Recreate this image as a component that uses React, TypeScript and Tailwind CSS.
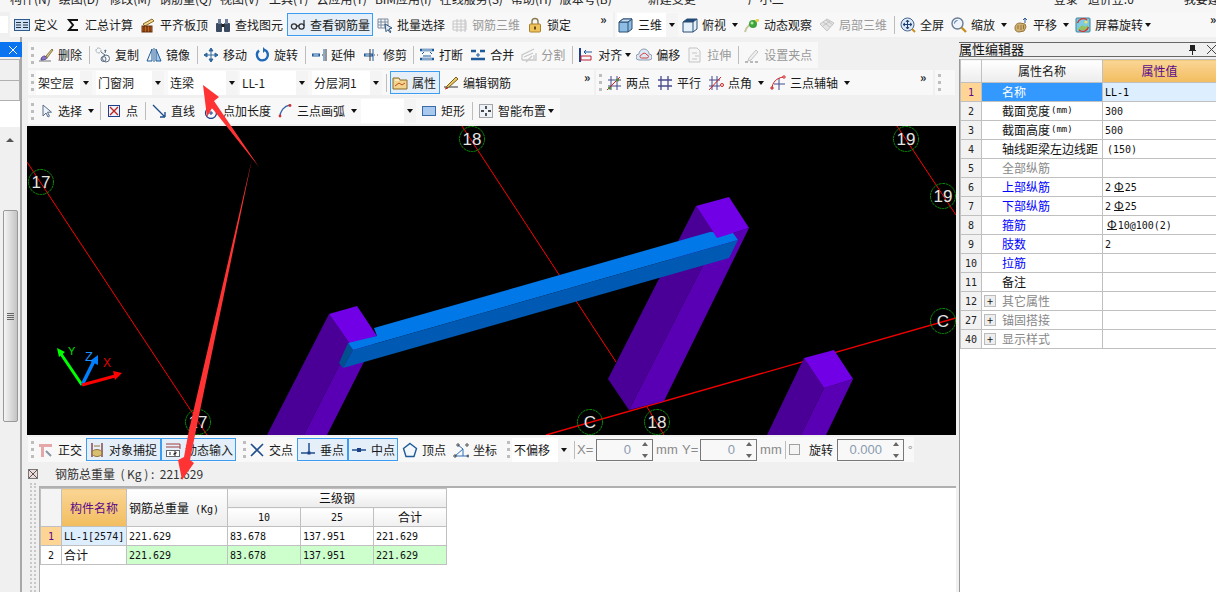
import React from 'react';
import clsx from 'clsx';

const S: React.FC<{ children: React.ReactNode }> = ({ children }) => (
  <svg width="16" height="16" viewBox="0 0 16 16" fill="none" className="shrink-0">
    {children}
  </svg>
);

// toolbar icons, all on a 16x16 grid
const icons: Record<string, React.ReactNode> = {
  define: <><rect x="0.5" y="2.5" width="15" height="11" fill="#cfe0f5" stroke="#2c5a8c" /><path d="M2 5.5h5M2 8h5M2 10.5h5M9 5.5h5M9 8h5M9 10.5h5" stroke="#234" /></>,
  sigma: <path d="M12 4V3H4l4 5-4 5h8v-1" stroke="#111" strokeWidth="2" />,
  flush: <><path d="M3 7l9-5 2 2-9 5z" fill="#f0d890" stroke="#8a6a20" /><rect x="2" y="9" width="10" height="6" fill="#c8641e" stroke="#6a3410" /><path d="M4 9v6M7 9v6M10 9v6" stroke="#401e08" /></>,
  binoc: <><rect x="1" y="6" width="6" height="9" rx="1" fill="#3a4a60" /><rect x="9" y="6" width="6" height="9" rx="1" fill="#3a4a60" /><rect x="3" y="2" width="3" height="5" fill="#6d7f98" /><rect x="10" y="2" width="3" height="5" fill="#6d7f98" /><rect x="6.5" y="7" width="3" height="3" fill="#222" /></>,
  glasses: <><circle cx="4" cy="9.5" r="2.6" stroke="#333" strokeWidth="1.3" /><circle cx="11.5" cy="9.5" r="2.6" stroke="#333" strokeWidth="1.3" /><path d="M6.5 9h2.5M14 9V3" stroke="#333" strokeWidth="1.3" /></>,
  batch: <><path d="M1 2h10v9H1zM1 5h10M1 8h10M4 2v9M8 2v9" stroke="#7a8ca0" /><path d="M8 7l7 4-3 1 2 3-1 .7-2-3-2 2z" fill="#dfe8f4" stroke="#34587c" /></>,
  rebar3d: <path d="M1 4h13v9H1zM1 7h13M1 10h13M5 2v13M9 2v13M13 2v13" stroke="#c6c6c6" />,
  lock: <><path d="M5 7V4.5a3 3 0 0 1 6 0V7" stroke="#8a7a50" strokeWidth="1.4" /><rect x="2.5" y="7" width="11" height="8" rx="1" fill="#efc35c" stroke="#a8802c" /><rect x="7" y="9.5" width="2" height="3" fill="#6a4a10" /></>,
  cube: <><path d="M1 5l4-3h9v10l-4 3H1z" fill="#8dbde4" stroke="#2d4f72" /><path d="M1 5h9v10M10 5l4-3" stroke="#2d4f72" /><path d="M1 5l4-3h9l-4 3z" fill="#c5dff2" stroke="#2d4f72" /></>,
  top: <><path d="M1 5l4-3h10v10l-4 3H1z" fill="#e4f0fa" stroke="#2d4f72" /><path d="M1 5l4-3h10l-4 3z" fill="#214a7a" /><path d="M1 5h10v10M11 5l4-3" stroke="#2d4f72" /></>,
  orbit: <><path d="M1 15C2 10 8 4 15 3" stroke="#c8c8a0" strokeWidth="2" /><circle cx="9" cy="7" r="4" fill="#3da43d" /><circle cx="8" cy="6" r="1.5" fill="#b4e8a0" /><circle cx="13" cy="3.5" r="1.6" fill="#f0d040" /></>,
  local3d: <><path d="M1 7l7-5 7 4-7 8z" fill="#e4e4e4" stroke="#c4c4c4" /><path d="M4 5l7 5M7 3l7 5M4 9l7-5" stroke="#c4c4c4" /></>,
  full: <><circle cx="7.5" cy="7.5" r="6.5" fill="#dde8f6" stroke="#44648c" /><path d="M7.5 3v9M3 7.5h9M7.5 3L6 5M7.5 3L9 5M7.5 12L6 10M7.5 12L9 10M3 7.5L5 6M3 7.5L5 9M12 7.5L10 6M12 7.5L10 9" stroke="#1f3f70" /><path d="M12 12l3 3" stroke="#c89020" strokeWidth="2" /></>,
  zoom: <><circle cx="6.5" cy="6.5" r="5.5" fill="#eef4fa" stroke="#6a7d92" strokeWidth="1.4" /><path d="M3.5 6.5a3 3 0 0 1 3-3" stroke="#3a6aa8" /><path d="M10.5 10.5l4.5 4.5" stroke="#c89020" strokeWidth="2.4" /></>,
  pan: <><path d="M2 11c0-4 3-5 5-5l5 1 1 3-2 4-5 1c-2 0-4-1-4-4z" fill="#d0b070" stroke="#94743a" /><path d="M5 8v4M8 8v5M10.5 8v4" stroke="#94743a" /><path d="M12 1v5M10 3l2-2 2 2" stroke="#2a5a9a" /></>,
  screen: <><rect x="1" y="1" width="14" height="14" rx="1" fill="#7ccbe0" stroke="#40809a" /><path d="M3 12l4-4 3 2 3-2v5H3z" fill="#94c060" /><circle cx="11" cy="5" r="1.6" fill="#f4e070" /><path d="M2.5 6A6 6 0 0 1 12 3M13.5 10A6 6 0 0 1 4 13" stroke="#d8302c" strokeWidth="1.3" /></>,
  del: <><path d="M1 14h12" stroke="#777" /><path d="M3 13c0-3 2-4 4-4l2 2c0 1-3 2-6 2z" fill="#8a78c8" stroke="#514090" /><path d="M8 9l6-7 1 1-6 8z" fill="#d8c890" stroke="#8a7840" /></>,
  copy: <><circle cx="3.5" cy="3.5" r="2.5" stroke="#7a8a9a" strokeDasharray="1.5 1" /><circle cx="11" cy="11.5" r="3.5" stroke="#576a80" /><circle cx="8.5" cy="12" r="2.5" stroke="#576a80" /><path d="M6 5l4 3" stroke="#576a80" /><path d="M11 3l-2 1M11 3l-1 3" stroke="#576a80" /></>,
  mirror: <><path d="M1 14L6 2v12z" fill="#eaf2fa" stroke="#1f5a9a" /><path d="M15 14L10 2v12z" fill="#a8c8ea" stroke="#1f5a9a" /><path d="M8 1v14" stroke="#1f5a9a" /></>,
  move: <path d="M8 1v14M1 8h14M8 1L6 4h4zM8 15l-2-3h4zM1 8l3-2v4zM15 8l-3-2v4z" fill="#30689c" stroke="#30689c" />,
  rotate: <><path d="M5 3.5A5.5 5.5 0 1 0 11 3" stroke="#1f6ab8" strokeWidth="2.4" /><path d="M9 0l3 3-3 3z" fill="#1f6ab8" /></>,
  extend: <><path d="M1 8h8" stroke="#1f5a9a" strokeWidth="3" /><path d="M2.5 8h5" stroke="#eaf2fa" /><path d="M11 8h1M15 2v12" stroke="#333" /><path d="M13 2v12" stroke="#1f5a9a" /></>,
  trim: <><path d="M1 8h9" stroke="#1f5a9a" strokeWidth="3" /><path d="M2.5 8h6" stroke="#eaf2fa" /><path d="M7 2v12" stroke="#333" /><path d="M11 8h1M14 8h1" stroke="#555" /><path d="M10 2v12" stroke="#1f5a9a" /></>,
  brk: <><path d="M1 3h14M1 12h14" stroke="#1f5a9a" strokeWidth="2.4" /><path d="M3 3h10M3 12h10" stroke="#eaf2fa" /><path d="M3 7l2-2M13 7l-2-2M4 9h8" stroke="#1f5a9a" /></>,
  merge: <><path d="M1 4h5M10 4h5M1 12h14" stroke="#1f5a9a" strokeWidth="2.4" /><path d="M8 6v4M6 8h4" stroke="#1f5a9a" /></>,
  split: <path d="M1 13h14v-7M1 13V8l12-6M3 10l9-4M5 15l6-6M13 12V8" stroke="#c8c8c8" strokeWidth="1.3" />,
  align: <><path d="M2 1v14" stroke="#1f3f8a" strokeWidth="2" /><path d="M3 13h10V9H3z" stroke="#c02030" /><path d="M6 5h8M6 5l2-2M6 5l2 2" stroke="#1f5a9a" /></>,
  offset: <><path d="M3 13a3 3 0 0 1 0-6 5 5 0 0 1 10 0 3 3 0 0 1 0 6z" fill="#dbe8f6" stroke="#8e9eb0" /><path d="M5.5 11a1.5 1.5 0 0 1 0-3 3 3 0 0 1 5.5 0 1.5 1.5 0 0 1 0 3z" stroke="#d04040" /></>,
  stretch: <><path d="M2 1h8l3 3v11H2z" fill="#f6f6f6" stroke="#c4c4c4" /><path d="M5 6h5M8 9h4M5 12h5" stroke="#c4c4c4" /></>,
  grips: <><path d="M1 15h3M6 15h3M11 15h3" stroke="#b8b8b8" strokeWidth="2" /><path d="M5 11l7-8 2 2-7 8-3 1z" fill="#efefef" stroke="#c4c4c4" /></>,
  props: <><path d="M1 3h6l1 2h7v9H1z" fill="#f2d48c" stroke="#8a6a2c" /><path d="M3 11l4-3 3 2 3-2" stroke="#c04c20" /><path d="M3 5h4" stroke="#fff" /></>,
  edit: <><path d="M1 12h14" stroke="#333" /><path d="M4 11L13 2l2 2-9 8-3 1z" fill="#e8c860" stroke="#7a6020" /><path d="M2 14l3-1" stroke="#c02020" /></>,
  two: <><path d="M2 5h13M2 11h13M5 1v14M11 1v14" stroke="#474a8c" /><path d="M1 15L14 2" stroke="#d02020" /><circle cx="3.5" cy="13" r="1.5" fill="#4a8a2c" /><circle cx="11.5" cy="5" r="1.5" fill="#4a8a2c" /></>,
  par: <path d="M1 5h14M1 11h14M4 1v14M11 1v14" stroke="#474a8c" strokeWidth="1.3" />,
  angle: <><path d="M1 5h11M1 11h11M4 1v14M9 1v14" stroke="#474a8c" /><path d="M1 15L13 2" stroke="#d02020" /><circle cx="14" cy="10" r="1.5" stroke="#d02020" /></>,
  three: <><path d="M9 3v12M4 9h11" stroke="#474a8c" /><path d="M2 14C2 7 7 3 13 2" stroke="#d02020" /><circle cx="2" cy="13" r="1.2" stroke="#d02020" /><circle cx="14" cy="2" r="1.2" stroke="#d02020" /></>,
  cursor: <path d="M5 2v11l3-3 2 4 1.5-.8-2-4h4z" fill="#eef3fa" stroke="#5a6d88" />,
  point: <><rect x="2.5" y="2.5" width="11" height="11" fill="#eef3fa" stroke="#1f3f8a" /><path d="M4 4l8 8M12 4l-8 8" stroke="#c02020" strokeWidth="1.3" /></>,
  line: <path d="M2 2l11 11M14 14v-5M14 14H9" stroke="#1f4f8a" strokeWidth="1.4" />,
  plen: <><circle cx="8" cy="10" r="5.5" stroke="#1f3f8a" strokeWidth="1.3" /><path d="M8 8v4M6 10h4M4 4l3-3" stroke="#1f3f8a" /></>,
  arc: <><path d="M3 14C3 8 7 3 13 2" stroke="#3a6aa8" strokeWidth="1.4" /><circle cx="3" cy="13" r="1.4" fill="#d03030" /><circle cx="13" cy="2.5" r="1.4" fill="#d03030" /></>,
  rect: <rect x="1.5" y="3.5" width="13" height="9" fill="#a8c8ee" stroke="#3a6aa8" />,
  smart: <><rect x="1.5" y="1.5" width="13" height="13" fill="#eef3fa" stroke="#555" strokeDasharray="1 1" /><path d="M8 3v3M8 10v3M3 8h3M10 8h3" stroke="#111" strokeWidth="1.4" /></>,
  ortho: <><path d="M1 2h13v3H6v10H3V5H1z" fill="#e4a8a8" /><path d="M8 9l5 5" stroke="#8a96a4" strokeWidth="2" /></>,
  snap: <><path d="M3 1v14M13 1v14" stroke="#7a3030" strokeWidth="1.3" /><ellipse cx="8" cy="11" rx="5" ry="3.5" fill="#d8c070" stroke="#94743a" /><path d="M5 4h6" stroke="#94743a" /></>,
  dyn: <><path d="M1 2h14M1 5h14" stroke="#a04040" /><path d="M15 2v5" stroke="#a04040" /><rect x="1.5" y="8.5" width="13" height="6" fill="#fff" stroke="#666" /><path d="M5 10v3M9 10h2v1.5H9V13h2" stroke="#222" /></>,
  cross: <path d="M2 2l12 12M14 2L2 14" stroke="#1f4f8a" strokeWidth="1.6" />,
  perp: <><path d="M1 11h14" stroke="#1f4f8a" strokeWidth="1.5" /><path d="M9 1v10" stroke="#1f4f8a" strokeWidth="1.5" /><rect x="7.5" y="9.5" width="3" height="3" fill="#1f3f8a" /></>,
  mid: <><path d="M1 8h14" stroke="#1f4f8a" strokeWidth="1.5" /><rect x="6" y="6" width="4" height="4" fill="#1f3f8a" /></>,
  vertex: <path d="M8 1.5l6.5 5-2.5 8H4l-2.5-8z" fill="#f2f7fc" stroke="#1f5a9a" strokeWidth="1.4" />,
  coord: <><path d="M2 14L10 7M10 7v7M2 14h13M5 3l5 4" stroke="#2a70b8" /><circle cx="2" cy="14" r="1.2" stroke="#444" /><circle cx="15" cy="14" r="1" stroke="#444" /><circle cx="5" cy="3" r="1.2" stroke="#444" /><circle cx="14" cy="3" r="1.2" stroke="#444" /></>,
};

const Tool: React.FC<{ icon: string; label: string; gray?: boolean; className?: string }> = ({ icon, label, gray, className }) => (
  <div className={clsx('flex items-center shrink-0', gray ? 'text-[#999999]' : 'text-[#1a1a1a]', className)}>
    <S>{icons[icon]}</S>
    <span className="ml-[4px] whitespace-nowrap">{label}</span>
  </div>
);

const Caret: React.FC<{ className?: string }> = ({ className }) => (
  <span className={clsx('block w-0 h-0 shrink-0 border-x-[3.5px] border-x-transparent border-t-[4px] border-t-[#111111]', className)} />
);

const Sep: React.FC<{ className?: string }> = ({ className }) => <span className={clsx('block w-px h-[18px] shrink-0 bg-[#bdbdbd]', className)} />;

const Grip: React.FC<{ className?: string }> = ({ className }) => (
  <span className={clsx('block w-[3px] h-[17px] shrink-0 border-l-[3px] border-dotted border-[#bdbdbd]', className)} />
);

const More: React.FC<{ className?: string }> = ({ className }) => (
  <span className={clsx('block self-start shrink-0 text-[12px] leading-[14px] font-bold text-[#222222]', className)}>»</span>
);

const Combo: React.FC<{ label?: string; className?: string }> = ({ label, className }) => (
  <div className={clsx('flex items-center h-[24px] bg-white shrink-0', className)}>
    <span className="pl-[2px] flex-1 whitespace-nowrap text-[#1a1a1a]">{label}</span>
    <span className="w-[12px] h-full bg-[#f4f4f4] flex items-center justify-center">
      <Caret />
    </span>
  </div>
);

const Spin: React.FC<{ value: string; className?: string }> = ({ value, className }) => (
  <div className={clsx('flex items-center h-[22px] border border-[#777777] shrink-0', className)}>
    <span className="flex-1 text-right pr-[7px] text-[13px] text-[#8a9bb0] font-['Liberation_Sans',sans-serif]">{value}</span>
    <span className="flex flex-col gap-[8px] w-[14px] items-center">
      <span className="block w-0 h-0 border-x-[3.5px] border-x-transparent border-b-[4px] border-b-[#666666]" />
      <span className="block w-0 h-0 border-x-[3.5px] border-x-transparent border-t-[4px] border-t-[#666666]" />
    </span>
  </div>
);

const menus: [string, string][] = [
  ['构件(N)', 'ml-[10px]'],
  ['绘图(D)', 'ml-[8px]'],
  ['修改(M)', 'ml-[10px]'],
  ['钢筋量(Q)', 'ml-[8px]'],
  ['视图(V)', 'ml-[8px]'],
  ['工具(T)', 'ml-[10px]'],
  ['云应用(Y)', 'ml-[8px]'],
  ['BIM应用(I)', 'ml-[8px]'],
  ['在线服务(S)', 'ml-[8px]'],
  ['帮助(H)', 'ml-[8px]'],
  ['版本号(B)', 'ml-[8px]'],
  ['新建变更', 'ml-[36px]'],
  ['广小二', 'ml-[52px]'],
  ['登录', 'ml-[270px]'],
  ['造价豆:0', 'ml-[10px]'],
  ['我要建议', 'ml-[50px]'],
];

// the 3D drawing in the viewport, in page coordinates
const Viewport: React.FC = () => {
  const bubbles: [number, number, string][] = [
    [41, 182, '17'],
    [198, 422, '17'],
    [472, 139, '18'],
    [657, 422, '18'],
    [906, 139, '19'],
    [943, 196, '19'],
    [943, 321, 'C'],
    [590, 422, 'C'],
  ];
  return (
    <svg width="929" height="309" viewBox="27 126 929 309" className="block bg-black ml-[5px] shrink-0">
      <path d="M462 126L616 362M647 407L664 435M897 126L956 215M27 162L207 435" stroke="#ff0000" fill="none" />
      <path d="M546 435L956 318" stroke="#f00000" strokeWidth="1.4" fill="none" />
      {bubbles.map(([x, y, t], i) => (
        <g key={i}>
          <circle cx={x} cy={y} r="12.5" fill="none" stroke="#0a8a0a" strokeDasharray="3 0.6" />
          <text x={x} y={y + 6} textAnchor="middle" fontSize="17" fontFamily="'Liberation Sans', sans-serif" fill="#e4e4e4">{t}</text>
        </g>
      ))}
      {/* columns */}
      <polygon points="696,206 717,238 629,410 608,379" fill="#4a0096" />
      <polygon points="717,238 749,228 664,401 629,410" fill="#5a00b4" />
      <polygon points="329,314 350,344 304,435 267,435" fill="#4a0096" />
      <polygon points="350,344 377,336 327,435 304,435" fill="#5a00b4" />
      <polygon points="329,314 357,306 377,336 350,344" fill="#7200e6" />
      <polygon points="804,358 824,388 801,435 767,435" fill="#4a0096" />
      <polygon points="824,388 853,379 826,435 801,435" fill="#5a00b4" />
      <polygon points="804,358 834,350 853,379 824,388" fill="#7200e6" />
      {/* beam */}
      <polygon points="374,328 710,232 733,233 738,240 353,350 348,343 377,336" fill="#0078e8" />
      <polygon points="353,350 738,240 729,258 343,368" fill="#005ab4" />
      <polygon points="348,343 353,350 343,368 339,363" fill="#00508f" />
      <polygon points="696,206 729,197 749,228 717,238" fill="#7200e6" />
      {/* axes */}
      <path d="M82 385L59 351" stroke="#00ff00" strokeWidth="3" />
      <polygon points="57,348 65,352 59,357" fill="#00ff00" />
      <path d="M82 385L94 361" stroke="#0080ff" strokeWidth="3.5" />
      <polygon points="98,355 98,365 90,361" fill="#0080ff" />
      <path d="M82 385L115 376" stroke="#ff0000" strokeWidth="3" />
      <polygon points="122,373 113,371 115,380" fill="#ff0000" />
      <text x="68" y="355" fontSize="11" fontFamily="'Liberation Sans', sans-serif" fill="#00e000">Y</text>
      <text x="85" y="361" fontSize="13" fontFamily="'Liberation Sans', sans-serif" fill="#1e90ff">Z</text>
      <text x="103" y="367" fontSize="12" fontFamily="'Liberation Sans', sans-serif" fill="#e00000">X</text>
    </svg>
  );
};

const Rebar: React.FC<{ className?: string }> = ({ className }) => (
  <span className={clsx("inline-block border-b border-[#111111] leading-[11px] text-[12px] font-['Noto_Sans_CJK_SC',sans-serif] mr-[1px]", className)}>Φ</span>
);

const propRows: { n: number; name: string; value?: React.ReactNode; tone?: 'gray' | 'blue'; unit?: boolean; plus?: boolean }[] = [
  { n: 2, name: '截面宽度', value: '300', unit: true },
  { n: 3, name: '截面高度', value: '500', unit: true },
  { n: 4, name: '轴线距梁左边线距', value: <span className="ml-[2px]">(150)</span> },
  { n: 5, name: '全部纵筋', tone: 'gray' },
  { n: 6, name: '上部纵筋', tone: 'blue', value: <>2<Rebar className="ml-[3px]" />25</> },
  { n: 7, name: '下部纵筋', tone: 'blue', value: <>2<Rebar className="ml-[3px]" />25</> },
  { n: 8, name: '箍筋', tone: 'blue', value: <><Rebar className="ml-[2px]" />10@100(2)</> },
  { n: 9, name: '肢数', tone: 'blue', value: '2' },
  { n: 10, name: '拉筋', tone: 'blue' },
  { n: 11, name: '备注' },
  { n: 12, name: '其它属性', tone: 'gray', plus: true },
  { n: 27, name: '锚固搭接', tone: 'gray', plus: true },
  { n: 40, name: '显示样式', tone: 'gray', plus: true },
];

const mono = "font-['DejaVu_Sans_Mono','Noto_Sans_CJK_SC',monospace] text-[10px]";
const cell = 'border border-[#c0c0c0] p-0 h-[19px]';

const PropertyPanel: React.FC = () => (
  <div className="w-[260px] shrink-0 flex flex-col pl-[3px] h-full">
    <div className="mt-[5px] h-[15px] flex items-center border-y border-[#666666] text-[13px] leading-[12px] text-[#111111]">
      <span className="flex-1 -mt-[1px]">属性编辑器</span>
      <svg width="9" height="10" viewBox="0 0 9 10" className="mr-[10px]">
        <path d="M2 0h5v5h1v1H5v4H4V6H1V5h1z" fill="#222" />
      </svg>
      <svg width="9" height="9" viewBox="0 0 9 9">
        <path d="M0 0l9 9M9 0L0 9" stroke="#444" />
      </svg>
    </div>
    <div className="mt-[2px] flex-1 bg-white border-l border-[#999999]">
      <table className="table-fixed border-collapse w-[256px] text-[12px]">
        <colgroup>
          <col className="w-[21px]" />
          <col className="w-[121px]" />
          <col className="w-[114px]" />
        </colgroup>
        <tbody>
          <tr className="h-[23px]">
            <td className="border border-[#c0c0c0] bg-gradient-to-b from-white to-[#ececec]" />
            <td className="border border-[#c0c0c0] bg-gradient-to-b from-white to-[#ececec] text-center text-[#1a1a1a]">属性名称</td>
            <td className="border border-[#c0c0c0] bg-gradient-to-b from-[#fad594] to-[#f2bd5e] text-center text-[#5a0a8a]">属性值</td>
          </tr>
          <tr>
            <td className={clsx(cell, 'bg-[#ffd596] text-center text-[#5a0a8a]', mono)}>1</td>
            <td className={clsx(cell, 'bg-[#3399ff] text-white pl-[20px]')}>名称</td>
            <td className={clsx(cell, 'bg-[#ddeeff] pl-[2px]', mono)}>LL-1</td>
          </tr>
          {propRows.map(r => (
            <tr key={r.n}>
              <td className={clsx(cell, 'bg-[#f2f2f2] text-center text-[#222222]', mono)}>{r.n}</td>
              <td className={clsx(cell, r.tone === 'gray' ? 'text-[#888888]' : r.tone === 'blue' ? 'text-[#0000ff]' : 'text-[#111111]')}>
                <div className="flex items-center">
                  {r.plus ? (
                    <span className="ml-[2px] mr-[6px] w-[12px] h-[12px] flex items-center justify-center border border-[#bbbbbb] bg-[#eeeeee] text-[11px] leading-[10px] text-[#111111]">+</span>
                  ) : (
                    <span className="w-[20px]" />
                  )}
                  <span className="whitespace-nowrap">{r.name}</span>
                  {r.unit && <span className="ml-[1px] text-[9px] font-['DejaVu_Sans_Mono',monospace]">(mm)</span>}
                </div>
              </td>
              <td className={clsx(cell, 'pl-[2px] whitespace-pre text-[#111111]', mono)}>{r.value}</td>
            </tr>
          ))}
        </tbody>
      </table>
    </div>
  </div>
);

const SteelTable: React.FC = () => (
  <table className="table-fixed border-collapse w-[406px] text-[12px] text-[#111111] bg-white">
    <colgroup>
      <col className="w-[21px]" />
      <col className="w-[65px]" />
      <col className="w-[101px]" />
      <col className="w-[73px]" />
      <col className="w-[73px]" />
      <col className="w-[73px]" />
    </colgroup>
    <tbody>
      <tr>
        <td rowSpan={2} className={clsx(cell, 'bg-[#f4f4f4]')} />
        <td rowSpan={2} className={clsx(cell, 'bg-gradient-to-b from-[#fad594] to-[#f2bd5e] text-center text-[#5a0a8a]')}>构件名称</td>
        <td rowSpan={2} className={clsx(cell, 'bg-gradient-to-b from-white to-[#ececec] pl-[2px] whitespace-nowrap')}>
          钢筋总重量<span className="text-[10px] font-['DejaVu_Sans_Mono',monospace]"> (Kg)</span>
        </td>
        <td colSpan={3} className={clsx(cell, 'bg-gradient-to-b from-white to-[#ececec] text-center')}>三级钢</td>
      </tr>
      <tr>
        <td className={clsx(cell, 'bg-gradient-to-b from-white to-[#f0f0f0] text-center', mono)}>10</td>
        <td className={clsx(cell, 'bg-gradient-to-b from-white to-[#f0f0f0] text-center', mono)}>25</td>
        <td className={clsx(cell, 'bg-gradient-to-b from-white to-[#f0f0f0] text-center')}>合计</td>
      </tr>
      <tr>
        <td className={clsx(cell, 'bg-[#ffd596] text-center text-[#5a0a8a]', mono)}>1</td>
        <td className={clsx(cell, 'bg-[#ddeeff] pl-[2px] whitespace-nowrap', mono)}>LL-1[2574]</td>
        <td className={clsx(cell, 'pl-[2px]', mono)}>221.629</td>
        <td className={clsx(cell, 'pl-[2px]', mono)}>83.678</td>
        <td className={clsx(cell, 'pl-[2px]', mono)}>137.951</td>
        <td className={clsx(cell, 'pl-[2px]', mono)}>221.629</td>
      </tr>
      <tr>
        <td className={clsx(cell, 'text-center', mono)}>2</td>
        <td className={clsx(cell, 'pl-[2px]')}>合计</td>
        <td className={clsx(cell, 'bg-[#ccffcc] pl-[2px]', mono)}>221.629</td>
        <td className={clsx(cell, 'bg-[#ccffcc] pl-[2px]', mono)}>83.678</td>
        <td className={clsx(cell, 'bg-[#ccffcc] pl-[2px]', mono)}>137.951</td>
        <td className={clsx(cell, 'bg-[#ccffcc] pl-[2px]', mono)}>221.629</td>
      </tr>
    </tbody>
  </table>
);

const selected = 'flex items-center border border-[#3c9cf0] bg-[#e4eff9] shrink-0';

const App: React.FC = () => {
  return (
    <div className="relative w-[1216px] h-[592px] overflow-hidden bg-[#f0f0f0] text-[12px] font-['Noto_Sans_CJK_SC','Liberation_Sans',sans-serif]">
      {/* clipped menu bar */}
      <div className="h-[12px] bg-[#f6f6f6] flex overflow-hidden whitespace-nowrap text-[#222222]">
        {menus.map(([m, c]) => (
          <span key={m} className={clsx('-mt-[10px] leading-[18px]', c)}>{m}</span>
        ))}
      </div>

      {/* main toolbar */}
      <div className="h-[25px] flex items-center">
        <div className="w-[8px] h-[17px] bg-white shrink-0" />
        <div className="ml-[2px] w-[603px] h-full bg-[#f8f8f8] flex items-center shrink-0">
          <Tool icon="define" label="定义" className="ml-[4px]" />
          <Tool icon="sigma" label="汇总计算" className="ml-[7px]" />
          <Tool icon="flush" label="平齐板顶" className="ml-[7px]" />
          <Tool icon="binoc" label="查找图元" className="ml-[7px]" />
          <div className={clsx(selected, 'ml-[4px] h-[23px] pl-[2px] pr-[2px]')}>
            <Tool icon="glasses" label="查看钢筋量" />
          </div>
          <Tool icon="batch" label="批量选择" className="ml-[4px]" />
          <Tool icon="rebar3d" label="钢筋三维" gray className="ml-[7px]" />
          <Tool icon="lock" label="锁定" className="ml-[7px]" />
          <More className="ml-[29px]" />
        </div>
        <div className="ml-[2px] flex-1 h-full bg-[#f8f8f8] flex items-center">
          <div className="ml-[2px] w-[61px] h-[24px] bg-white flex items-center shrink-0">
            <Tool icon="cube" label="三维" className="ml-[1px]" />
            <span className="ml-[4px] w-[12px] h-[24px] bg-[#f4f4f4] flex items-center justify-center">
              <Caret />
            </span>
          </div>
          <Tool icon="top" label="俯视" className="ml-[4px]" />
          <Caret className="ml-[6px]" />
          <Tool icon="orbit" label="动态观察" className="ml-[6px]" />
          <Tool icon="local3d" label="局部三维" gray className="ml-[7px]" />
          <Sep className="ml-[7px]" />
          <Tool icon="full" label="全屏" className="ml-[5px]" />
          <Tool icon="zoom" label="缩放" className="ml-[7px]" />
          <Caret className="ml-[6px]" />
          <Tool icon="pan" label="平移" className="ml-[6px]" />
          <Caret className="ml-[6px]" />
          <Tool icon="screen" label="屏幕旋转" className="ml-[6px]" />
          <Caret className="ml-[2px]" />
          <More className="ml-[59px]" />
        </div>
      </div>

      <div className="flex h-[555px]">
        {/* left dock */}
        <div className="w-[22px] shrink-0 border-r-2 border-[#a8a8a8] flex flex-col">
          <div className="mt-[5px] h-[15px] -mr-[2px] bg-[#0a74f0] flex items-center justify-end pr-[5px]">
            <svg width="8" height="8" viewBox="0 0 8 8">
              <path d="M0 0l8 8M8 0L0 8" stroke="#fff" />
            </svg>
          </div>
          <div className="mt-[2px] h-[22px] border border-l-0 border-[#b0b0b0] bg-[#f0f0f0]" />
          <div className="h-[20px] border-b border-r border-[#b0b0b0] bg-[#f0f0f0]" />
          <div className="h-[26px] bg-white" />
          <div className="flex-1 flex flex-col bg-[#f0f0f0]">
            <div className="h-[83px] flex justify-center pt-[11px]">
              <span className="block w-0 h-0 border-x-[4px] border-x-transparent border-b-[4px] border-b-[#555555]" />
            </div>
            <div className="ml-[3px] w-[15px] h-[212px] rounded-[2px] border border-[#999999] bg-gradient-to-r from-[#f4f4f4] to-[#c4c4c4] flex items-center justify-center">
              <span className="block w-[7px] h-[7px] border-y-[3px] border-double border-[#666666]" />
            </div>
          </div>
        </div>

        {/* center */}
        <div className="w-[934px] shrink-0 flex flex-col">
          <div className="mt-[5px] ml-[6px] h-[26px] w-[790px] bg-[#f8f8f8] flex items-center">
            <Grip className="ml-[3px]" />
            <Tool icon="del" label="删除" className="ml-[4px]" />
            <Sep className="ml-[7px]" />
            <Tool icon="copy" label="复制" className="ml-[5px]" />
            <Tool icon="mirror" label="镜像" className="ml-[7px]" />
            <Sep className="ml-[7px]" />
            <Tool icon="move" label="移动" className="ml-[5px]" />
            <Tool icon="rotate" label="旋转" className="ml-[7px]" />
            <Sep className="ml-[7px]" />
            <Tool icon="extend" label="延伸" className="ml-[5px]" />
            <Tool icon="trim" label="修剪" className="ml-[8px]" />
            <Sep className="ml-[6px]" />
            <Tool icon="brk" label="打断" className="ml-[5px]" />
            <Tool icon="merge" label="合并" className="ml-[7px]" />
            <Tool icon="split" label="分割" gray className="ml-[7px]" />
            <Sep className="ml-[7px]" />
            <Tool icon="align" label="对齐" className="ml-[5px]" />
            <Caret className="ml-[3px]" />
            <Tool icon="offset" label="偏移" className="ml-[5px]" />
            <Tool icon="stretch" label="拉伸" gray className="ml-[7px]" />
            <Sep className="ml-[7px]" />
            <Tool icon="grips" label="设置夹点" gray className="ml-[5px]" />
          </div>

          <div className="mt-[2px] ml-[6px] h-[25px] flex">
            <div className="w-[566px] shrink-0 bg-[#f8f8f8] flex items-center">
              <Grip className="ml-[3px]" />
              <Combo label="架空层" className="ml-[2px] w-[56px]" />
              <Combo label="门窗洞" className="ml-[4px] w-[68px]" />
              <Combo label="连梁" className="ml-[4px] w-[70px]" />
              <Combo label="LL-1" className="ml-[2px] w-[68px]" />
              <Combo label="分层洞1" className="ml-[4px] w-[70px]" />
              <Sep className="ml-[4px]" />
              <div className={clsx(selected, 'ml-[3px] h-[23px] w-[50px] pl-[1px]')}>
                <Tool icon="props" label="属性" />
              </div>
              <Tool icon="edit" label="编辑钢筋" className="ml-[3px]" />
              <More className="ml-[73px]" />
            </div>
            <div className="ml-[2px] w-[337px] shrink-0 bg-[#f8f8f8] flex items-center">
              <Grip className="ml-[3px]" />
              <Tool icon="two" label="两点" className="ml-[4px]" />
              <Tool icon="par" label="平行" className="ml-[7px]" />
              <Tool icon="angle" label="点角" className="ml-[7px]" />
              <Caret className="ml-[6px]" />
              <Tool icon="three" label="三点辅轴" className="ml-[6px]" />
              <Caret className="ml-[6px]" />
              <More className="ml-[70px]" />
            </div>
            <div className="ml-[2px] w-[20px] shrink-0 bg-[#f8f8f8] flex items-center">
              <Grip className="ml-[3px]" />
            </div>
          </div>

          <div className="mt-[3px] ml-[6px] h-[26px] w-[532px] bg-[#f8f8f8] flex items-center">
            <Grip className="ml-[3px]" />
            <Tool icon="cursor" label="选择" className="ml-[4px]" />
            <Caret className="ml-[6px]" />
            <Sep className="ml-[6px]" />
            <Tool icon="point" label="点" className="ml-[5px]" />
            <Sep className="ml-[7px]" />
            <Tool icon="line" label="直线" className="ml-[5px]" />
            <Tool icon="plen" label="点加长度" className="ml-[8px]" />
            <Tool icon="arc" label="三点画弧" className="ml-[6px]" />
            <Caret className="ml-[6px]" />
            <Combo className="ml-[4px] w-[55px]" />
            <Tool icon="rect" label="矩形" className="ml-[5px]" />
            <Sep className="ml-[7px]" />
            <Tool icon="smart" label="智能布置" className="ml-[5px]" />
            <Caret className="ml-[2px]" />
          </div>

          <div className="mt-[2px] h-[309px] shrink-0">
            <Viewport />
          </div>

          <div className="mt-[2px] ml-[6px] h-[25px] w-[886px] bg-[#f8f8f8] flex items-center shrink-0">
            <Grip className="ml-[3px]" />
            <Tool icon="ortho" label="正交" className="ml-[4px]" />
            <div className={clsx(selected, 'ml-[4px] h-[23px] w-[75px] pl-[2px]')}>
              <Tool icon="snap" label="对象捕捉" />
            </div>
            <div className={clsx(selected, 'h-[23px] w-[75px] pl-[3px]')}>
              <Tool icon="dyn" label="动态输入" />
            </div>
            <Grip className="ml-[7px]" />
            <Tool icon="cross" label="交点" className="ml-[3px]" />
            <div className={clsx(selected, 'ml-[4px] h-[23px] w-[51px] pl-[2px]')}>
              <Tool icon="perp" label="垂点" />
            </div>
            <div className={clsx(selected, 'h-[23px] w-[50px] pl-[2px]')}>
              <Tool icon="mid" label="中点" />
            </div>
            <Tool icon="vertex" label="顶点" className="ml-[4px]" />
            <Tool icon="coord" label="坐标" className="ml-[7px]" />
            <Grip className="ml-[10px]" />
            <Combo label="不偏移" className="ml-[2px] w-[58px]" />
            <Sep className="ml-[4px]" />
            <span className="ml-[2px] w-[16px] text-[13px] text-[#8a8a8a] font-['Liberation_Sans',sans-serif]">X=</span>
            <Spin value="0" className="ml-[3px] w-[57px]" />
            <span className="ml-[3px] w-[21px] text-[13px] text-[#8a8a8a] font-['Liberation_Sans',sans-serif]">mm</span>
            <span className="ml-[5px] w-[15px] text-[13px] text-[#8a8a8a] font-['Liberation_Sans',sans-serif]">Y=</span>
            <Spin value="0" className="ml-[3px] w-[57px]" />
            <span className="ml-[3px] w-[21px] text-[13px] text-[#8a8a8a] font-['Liberation_Sans',sans-serif]">mm</span>
            <Sep className="ml-[4px]" />
            <span className="ml-[3px] w-[11px] h-[11px] border border-[#a0a0a0] bg-[#f4f4f4] shrink-0" />
            <span className="ml-[9px] text-[#1a1a1a]">旋转</span>
            <Spin value="0.000" className="ml-[4px] w-[67px]" />
            <span className="ml-[4px] text-[12px] text-[#8a8a8a]">°</span>
          </div>

          {/* result panel */}
          <div className="h-[24px] flex items-center shrink-0">
            <span className="ml-[6px] w-[10px] h-[10px] border border-[#777777] bg-[#f0dada] flex items-center justify-center shrink-0">
              <svg width="8" height="8" viewBox="0 0 8 8">
                <path d="M0 0l8 8M8 0L0 8" stroke="#555" />
              </svg>
            </span>
            <span className="ml-[17px] text-[12px] text-[#333333] whitespace-pre">钢筋总重量  ( Kg ) :  221.629</span>
          </div>
          <div className="flex-1 flex min-h-0">
            <span className="ml-[8px] -mt-[3px] w-[6px] border-x-2 border-dotted border-[#c8c8c8] shrink-0" />
            <div className="ml-[3px] flex-1 border-l border-t-2 border-[#b0b0b0] bg-white">
              <SteelTable />
            </div>
          </div>
        </div>

        <PropertyPanel />
      </div>

      {/* red annotation arrows drawn over the screenshot */}
      <svg width="1216" height="592" viewBox="0 0 1216 592" className="absolute left-0 top-0 pointer-events-none">
        <polygon points="203,85 219,97 214,101 259,167 212,108 207,117" fill="#ff3333" />
        <polygon points="252,159 196,430 190,460 194,463 182,480 178,460 184,457 189,430" fill="#ff3333" />
      </svg>
    </div>
  );
};

export default App;
